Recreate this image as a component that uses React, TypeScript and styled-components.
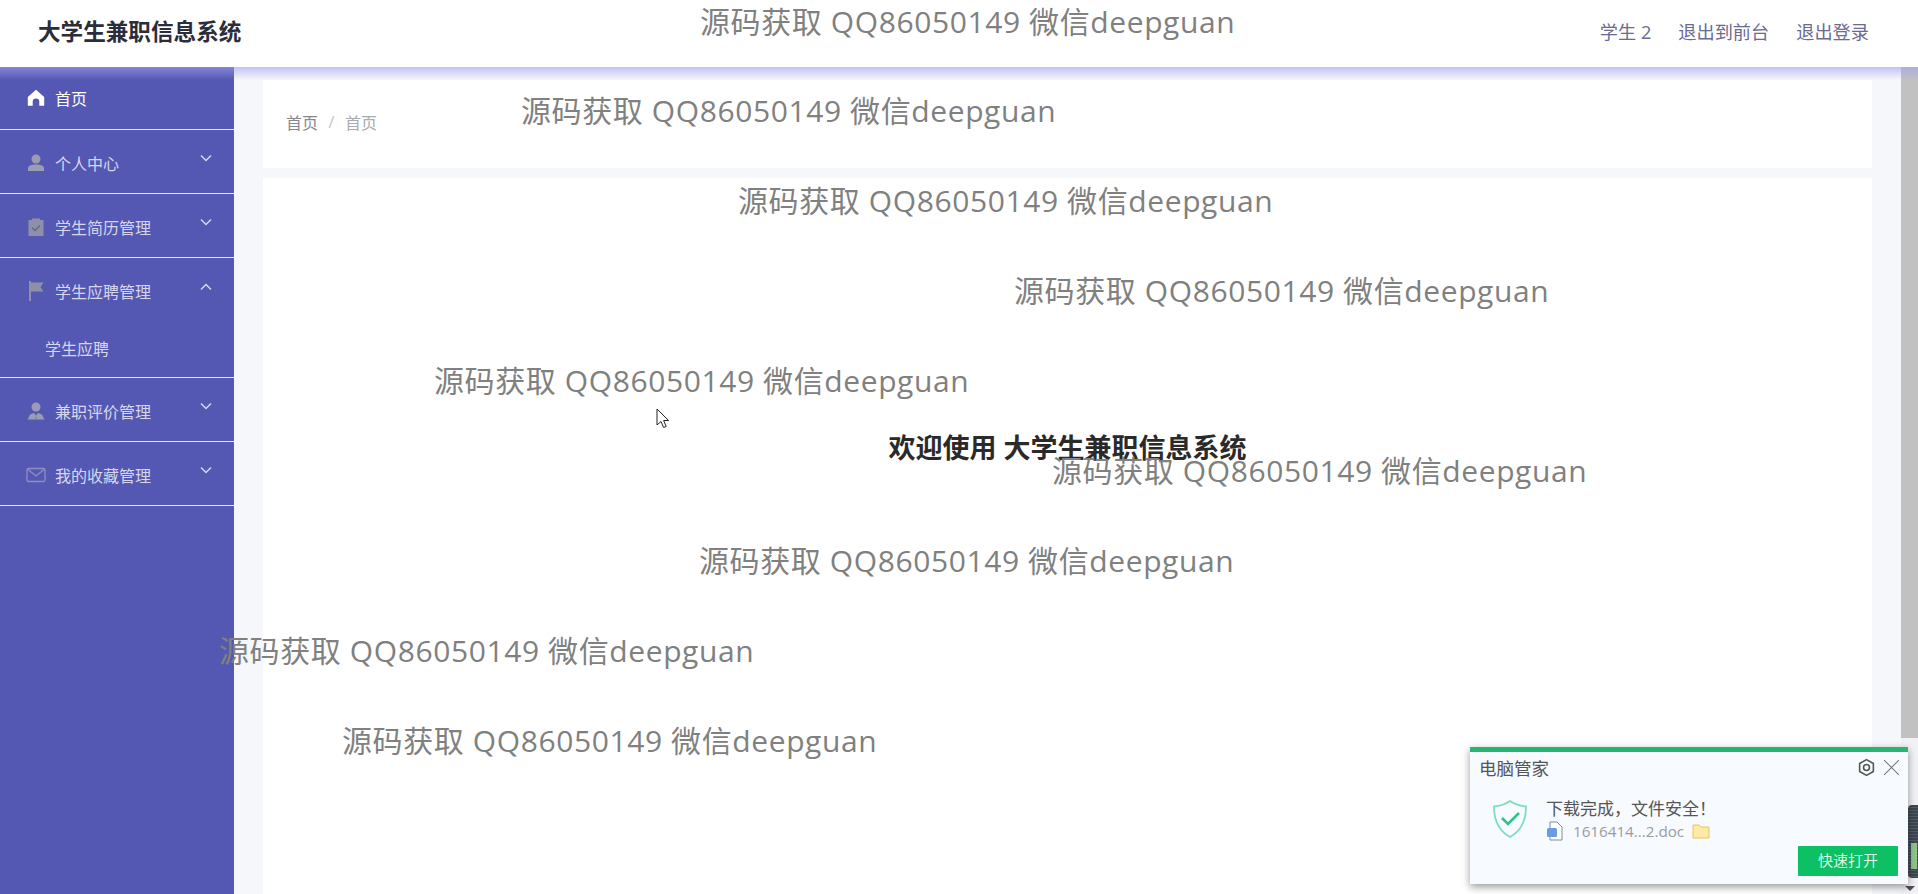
import React from 'react';
import styled, { createGlobalStyle } from 'styled-components';

const cjkStack = `"Open Sans", "Noto Sans CJK SC", sans-serif`;

const GlobalStyle = createGlobalStyle`
  html, body {
    margin: 0;
    padding: 0;
    height: 100%;
    overflow: hidden;
    background: #f6f7fb;
    font-family: ${cjkStack};
  }
`;

const Root = styled.div`
  position: relative;
  display: flex;
  flex-direction: column;
  width: 1918px;
  height: 894px;
  overflow: hidden;
`;

const Header = styled.header`
  position: relative;
  z-index: 2;
  flex: none;
  display: flex;
  align-items: center;
  justify-content: space-between;
  height: 67px;
  padding: 0 49px 0 38px;
  background: #fff;

  &::after {
    content: '';
    position: absolute;
    left: 0;
    right: 0;
    top: 100%;
    height: 13px;
    background: linear-gradient(to bottom, rgba(159, 162, 240, 0.61), rgba(159, 162, 240, 0));
    pointer-events: none;
  }
`;

const Brand = styled.div`
  font-size: 22.6px;
  font-weight: 700;
  color: #2b2d3a;
  line-height: 1;
  margin-top: -3px;
`;

const HeaderLinks = styled.nav`
  display: flex;
  gap: 27px;
  font-size: 18.2px;
  color: #6a6a92;
  margin-top: -5px;
`;

const Body = styled.div`
  flex: 1;
  display: flex;
  min-height: 0;
`;

const Sidebar = styled.aside`
  flex: none;
  width: 234px;
  background: #5558b2;
`;

const MenuRow = styled.div`
  display: flex;
  align-items: center;
  box-sizing: border-box;
  height: 64px;
  padding: 2px 21px 0 26px;
  border-bottom: 1px solid #e9e9f5;
  color: #d6d7ee;
  font-size: 16px;
`;

const FirstRow = styled(MenuRow)`
  height: 63px;
  padding-top: 0;
  padding-bottom: 1px;
  color: #fff;
`;

const OpenRow = styled(MenuRow)`
  border-bottom: none;
`;

const SubRow = styled.div`
  display: flex;
  align-items: center;
  box-sizing: border-box;
  height: 56px;
  padding: 0 0 3px 45px;
  border-bottom: 1px solid #e9e9f5;
  color: #d6d7ee;
  font-size: 16px;
`;

const MenuIcon = styled.svg`
  flex: none;
  width: 20px;
  height: 20px;
  margin-right: 9px;
`;

const MenuLabel = styled.span`
  flex: 1;
`;

const Chevron = styled.svg`
  flex: none;
  width: 14px;
  height: 14px;
  margin-top: -9px;
  fill: none;
  stroke: #d6d7ee;
  stroke-width: 1.5;
`;

const Content = styled.main`
  flex: 1;
  display: flex;
  flex-direction: column;
  gap: 10px;
  padding: 13px 29px 0 29px;
  min-width: 0;
  background: #f6f7fb;
`;

const Crumbs = styled.div`
  flex: none;
  display: flex;
  align-items: center;
  gap: 10.5px;
  height: 88px;
  padding: 0 23px 4px;
  box-sizing: border-box;
  background: #fff;
  font-size: 16px;
  color: #85878f;
`;

const CrumbSep = styled.span`
  color: #c0c4cc;
`;

const CrumbLast = styled.span`
  color: #a8abb2;
`;

const Panel = styled.section`
  flex: 1;
  display: flex;
  justify-content: center;
  padding-top: 252px;
  background: #fff;
`;

const Welcome = styled.h1`
  margin: 0;
  font-size: 27px;
  font-weight: 700;
  line-height: 36px;
  color: #2a2a2a;
`;

const Scrollbar = styled.div`
  flex: none;
  display: flex;
  flex-direction: column;
  justify-content: space-between;
  align-items: center;
  width: 17px;
  background: #f1f1f6;
`;

const ScrollThumb = styled.div`
  width: 100%;
  height: 671px;
  background: #c1c1c1;
`;

const ScrollArrow = styled.div`
  width: 0;
  height: 0;
  margin-bottom: 3px;
  border-left: 5px solid transparent;
  border-right: 5px solid transparent;
  border-top: 5px solid #505050;
`;

const Watermark = styled.div<{ $x: number; $y: number }>`
  position: absolute;
  z-index: 3;
  left: ${p => p.$x}px;
  top: ${p => p.$y}px;
  font-size: 30px;
  letter-spacing: 0.6px;
  line-height: 40px;
  color: #808080;
  white-space: nowrap;
  pointer-events: none;
`;

const Cursor = styled.svg`
  position: absolute;
  z-index: 4;
  left: 656px;
  top: 408px;
  width: 14px;
  height: 21px;
`;

const Toast = styled.aside`
  position: absolute;
  z-index: 5;
  left: 1470px;
  top: 747px;
  display: flex;
  flex-direction: column;
  box-sizing: border-box;
  width: 438px;
  height: 137px;
  background: #f7fafe;
  border-top: 5px solid #27b573;
  box-shadow: 0 3px 8px rgba(0, 0, 0, 0.4);
`;

const ToastHead = styled.div`
  display: flex;
  align-items: center;
  height: 30px;
  padding: 0 7px 0 9px;
  font-size: 17.5px;
  color: #555;
`;

const ToastTitle = styled.span`
  flex: 1;
`;

const ToastTool = styled.svg`
  width: 19px;
  height: 19px;
  margin-left: 6px;
  fill: none;
  stroke: #555;
  stroke-width: 1.5;
`;

const ToastClose = styled(ToastTool)`
  stroke: #777;
  stroke-width: 1;
`;

const ToastBody = styled.div`
  display: flex;
  padding: 16px 0 0 22px;
`;

const Shield = styled.svg`
  flex: none;
  width: 36px;
  height: 40px;
  margin-right: 18px;
  margin-top: 1px;
  fill: none;
`;

const ToastMessage = styled.div`
  font-size: 17px;
  line-height: 21px;
  color: #555;
`;

const FileLine = styled.div`
  display: flex;
  align-items: center;
  gap: 9px;
  margin-top: 2px;
  font-size: 15.2px;
  color: #9a9ca3;
`;

const FileIcon = styled.svg`
  width: 17px;
  height: 20px;
  margin-right: 1px;
`;

const FolderIcon = styled.svg`
  width: 18px;
  height: 15px;
  margin-left: -1px;
`;

const OpenButton = styled.button`
  position: absolute;
  right: 10px;
  bottom: 8px;
  width: 100px;
  height: 30px;
  padding: 0 0 3px;
  border: none;
  border-radius: 1px;
  background: #0cc063;
  color: #dff6e8;
  font-family: inherit;
  font-size: 15px;
`;

const MeterWidget = styled.div`
  position: absolute;
  z-index: 4;
  left: 1908px;
  top: 805px;
  width: 10px;
  height: 73px;
  border-radius: 4px 0 0 4px;
  background:
    linear-gradient(to bottom, transparent 0 52%, #8fc48a 52% 88%, transparent 88%) 3px 0 / 6px 100% no-repeat,
    repeating-linear-gradient(to bottom, #3c4650 0 2px, #525c66 2px 3px);
`;

const watermarks = [
  { x: 700, y: 2 },
  { x: 521, y: 91 },
  { x: 738, y: 181 },
  { x: 1014, y: 271 },
  { x: 434, y: 361 },
  { x: 1052, y: 451 },
  { x: 699, y: 541 },
  { x: 219, y: 631 },
  { x: 342, y: 721 },
];

const HomeIcon = () => (
  <MenuIcon viewBox="0 0 20 20">
    <path d="M10 1.8 1.8 9v8.700h4.900v-4a3.300 3.300 0 0 1 6.600 0v4h4.900V9z" fill="#fff" />
  </MenuIcon>
);

const UserIcon = () => (
  <MenuIcon viewBox="0 0 20 20">
    <circle cx="10" cy="6" r="4.500" fill="#9a9bb4" />
    <path d="M2 18v-2.500C2 12.800 5 11.500 10 11.500s8 1.300 8 4V18z" fill="#9a9bb4" />
  </MenuIcon>
);

const ReviewerIcon = () => (
  <MenuIcon viewBox="0 0 20 20">
    <circle cx="10" cy="6" r="4.500" fill="#9a9bb4" />
    <path d="M1.500 18.500 4 13.500 8 12l2 2.500 2-2.500 4 1.500 2.500 5z" fill="#9a9bb4" />
    <path d="M10 14.500 9 18.500h2z" fill="#7f80a6" />
  </MenuIcon>
);

const ClipboardIcon = () => (
  <MenuIcon viewBox="0 0 20 20">
    <path d="M2.500 3h3.500V1.500h8V3h3.500v16h-15z" fill="#8e8fa8" />
    <path d="M6 10.500 9 13.500l5-5" fill="none" stroke="#66678f" strokeWidth="1.500" />
  </MenuIcon>
);

const FlagIcon = () => (
  <MenuIcon viewBox="0 0 20 20">
    <path d="M3 0h2v20H3zM5 1.500h12.500l-3 4.500 3 4.500H5z" fill="#8e8fa8" />
  </MenuIcon>
);

const MailIcon = () => (
  <MenuIcon viewBox="0 0 20 20">
    <rect x="1" y="3.500" width="18" height="13" rx="1.500" fill="none" stroke="#8e8fc0" strokeWidth="1.300" />
    <path d="M2 4.500 10 11l8-6.500" fill="none" stroke="#8e8fc0" strokeWidth="1.300" />
  </MenuIcon>
);

const ChevronIcon = ({ up }: { up?: boolean }) => (
  <Chevron viewBox="0 0 14 14">
    <path d={up ? 'M2 9.500 7 4.500l5 5' : 'M2 4.500 7 9.500l5-5'} />
  </Chevron>
);

const App = () => {
  return (
    <Root>
      <GlobalStyle />
      <Header>
        <Brand>大学生兼职信息系统</Brand>
        <HeaderLinks>
          <span>学生 2</span>
          <span>退出到前台</span>
          <span>退出登录</span>
        </HeaderLinks>
      </Header>
      <Body>
        <Sidebar>
          <FirstRow>
            <HomeIcon />
            <MenuLabel>首页</MenuLabel>
          </FirstRow>
          <MenuRow>
            <UserIcon />
            <MenuLabel>个人中心</MenuLabel>
            <ChevronIcon />
          </MenuRow>
          <MenuRow>
            <ClipboardIcon />
            <MenuLabel>学生简历管理</MenuLabel>
            <ChevronIcon />
          </MenuRow>
          <OpenRow>
            <FlagIcon />
            <MenuLabel>学生应聘管理</MenuLabel>
            <ChevronIcon up />
          </OpenRow>
          <SubRow>学生应聘</SubRow>
          <MenuRow>
            <ReviewerIcon />
            <MenuLabel>兼职评价管理</MenuLabel>
            <ChevronIcon />
          </MenuRow>
          <MenuRow>
            <MailIcon />
            <MenuLabel>我的收藏管理</MenuLabel>
            <ChevronIcon />
          </MenuRow>
        </Sidebar>
        <Content>
          <Crumbs>
            <span>首页</span>
            <CrumbSep>/</CrumbSep>
            <CrumbLast>首页</CrumbLast>
          </Crumbs>
          <Panel>
            <Welcome>欢迎使用 大学生兼职信息系统</Welcome>
          </Panel>
        </Content>
        <Scrollbar>
          <ScrollThumb />
          <ScrollArrow />
        </Scrollbar>
      </Body>

      {watermarks.map(w => (
        <Watermark key={`${w.x}-${w.y}`} $x={w.x} $y={w.y}>
          源码获取 QQ86050149 微信deepguan
        </Watermark>
      ))}

      <Cursor viewBox="0 0 14 21">
        <path d="M1 1v16l4-3.500 2.600 6 2.600-1.100-2.600-5.900h5z" fill="#fff" stroke="#222" strokeWidth="1" />
      </Cursor>

      <MeterWidget />

      <Toast>
        <ToastHead>
          <ToastTitle>电脑管家</ToastTitle>
          <ToastTool viewBox="0 0 18 18">
            <path d="M9 1.500 15.500 5.250v7.500L9 16.500 2.500 12.750v-7.500z" strokeLinejoin="round" />
            <circle cx="9" cy="9" r="2.800" />
          </ToastTool>
          <ToastClose viewBox="0 0 18 18">
            <path d="M2 2 16 16M16 2 2 16" />
          </ToastClose>
        </ToastHead>
        <ToastBody>
          <Shield viewBox="0 0 36 40">
            <path d="M18 2c5 3.500 10 5 16 5.500C34 22 29 32 18 38 7 32 2 22 2 7.500 8 7 13 5.500 18 2z" stroke="#7fdcbc" strokeWidth="1.800" />
            <path d="M10 19l6 6 11-11" stroke="#2cc486" strokeWidth="2.600" />
          </Shield>
          <div>
            <ToastMessage>下载完成，文件安全！</ToastMessage>
            <FileLine>
              <FileIcon viewBox="0 0 17 20">
                <path d="M4 1h7l5 5v13H4z" fill="#fff" stroke="#7a8ba5" />
                <rect x="1" y="7" width="10" height="9" rx="1.500" fill="#6a9de0" />
              </FileIcon>
              <span>1616414...2.doc</span>
              <FolderIcon viewBox="0 0 18 15">
                <path d="M1 1h6l2 2h8v11H1z" fill="#fdeaa6" stroke="#e6c65c" />
              </FolderIcon>
            </FileLine>
          </div>
        </ToastBody>
        <OpenButton>快速打开</OpenButton>
      </Toast>
    </Root>
  );
};

export default App;
